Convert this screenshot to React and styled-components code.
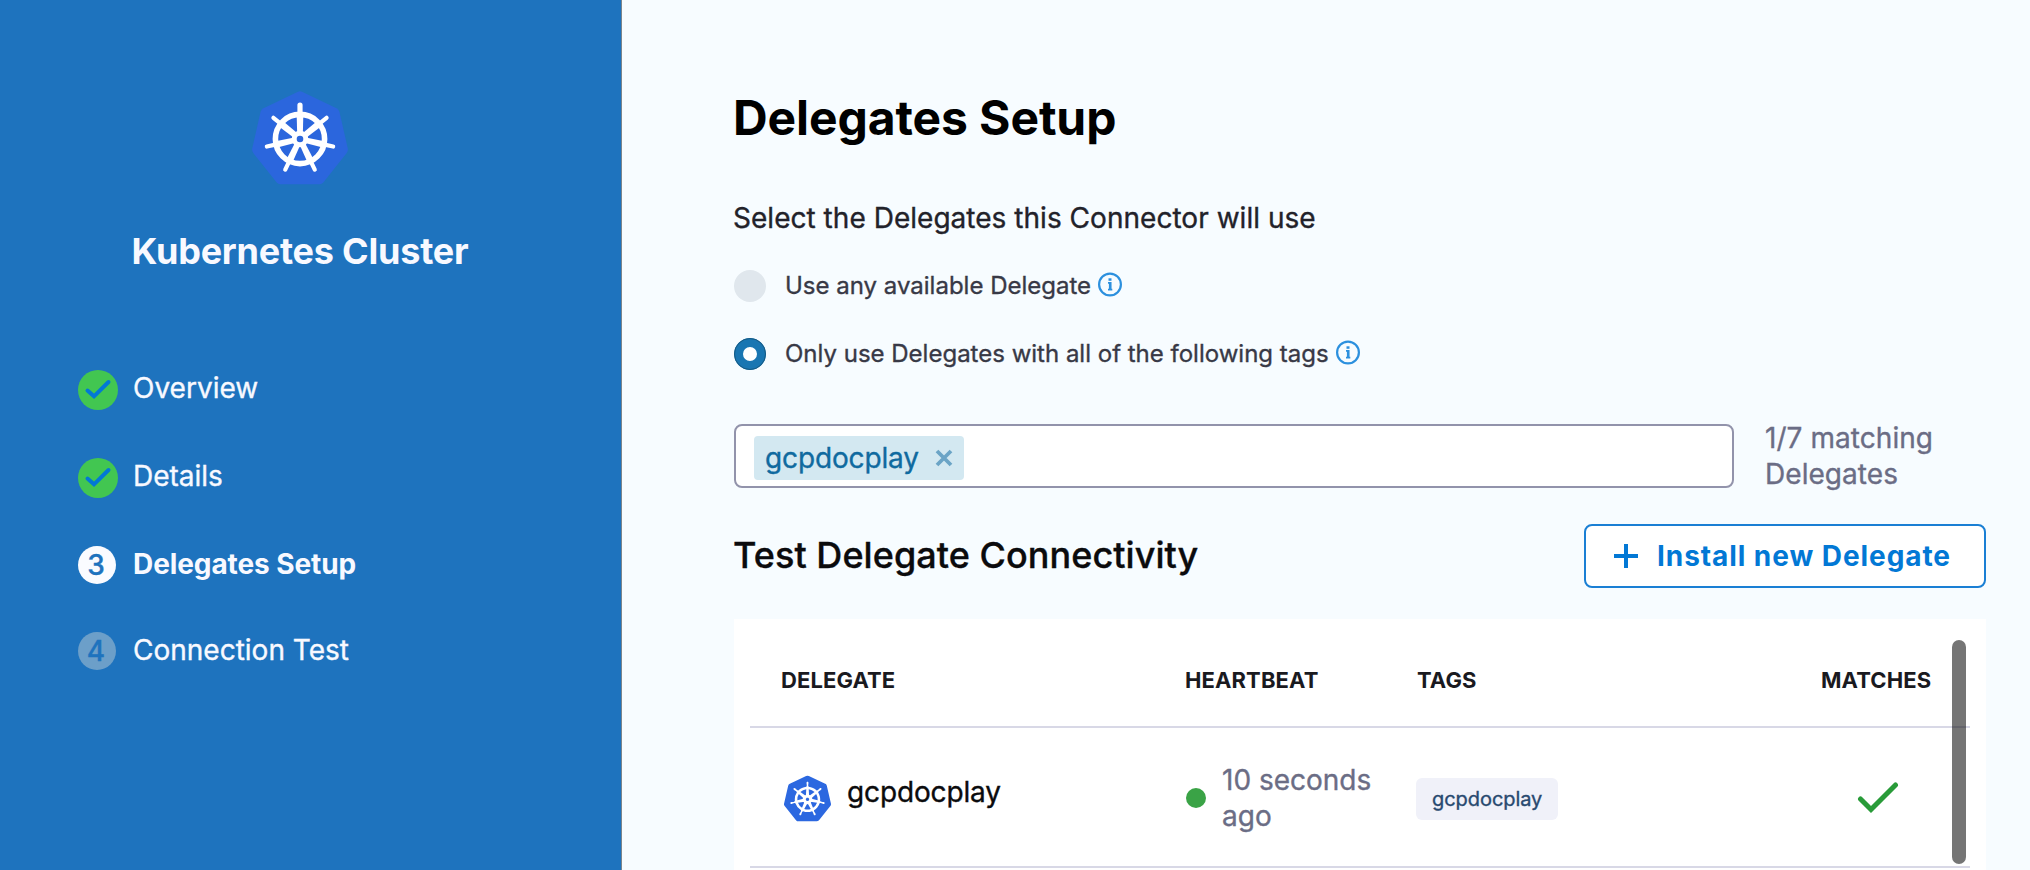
import React from "react";
import styled, { createGlobalStyle } from "styled-components";
import { SiKubernetes } from "react-icons/si";

const GlobalStyle = createGlobalStyle`
  *, *::before, *::after { box-sizing: border-box; }
  body {
    margin: 0;
    overflow: hidden;
    background: #f7fcff;
    font-family: Inter, "Liberation Sans", sans-serif;
    font-size: 28px;
    font-weight: 400;
    -webkit-text-stroke: 0.35px currentColor;
    color: #22222a;
  }
  h1, h2, p { margin: 0; font-weight: inherit; }
`;

const Page = styled.div`
  display: flex;
  height: 870px;
  overflow: hidden;
`;

const Sidebar = styled.aside`
  width: 622px;
  flex: none;
  padding: 91px 21px 0 0;
  background: #1e73be;
  border-right: 1px solid #7d868c;
  color: #f8f9ff;
`;

const Brand = styled.div`
  display: flex;
  flex-direction: column;
  align-items: center;
  gap: 44px;
`;

const BrandName = styled.h2`
  font-size: 36px;
  font-weight: 700;
  line-height: 44px;
  letter-spacing: -0.006em;
  -webkit-text-stroke: 0;
`;

const Steps = styled.div`
  display: flex;
  flex-direction: column;
  gap: 48px;
  padding: 97px 0 0 78px;
`;

const Step = styled.div`
  display: grid;
  grid-template-columns: 40px auto;
  column-gap: 15px;
  align-items: center;
  height: ${(p) => (p.$done ? 40 : 38)}px;
`;

const StepLabel = styled.span`
  line-height: 34px;
  padding-bottom: ${(p) => (p.$done ? 5 : 3)}px;
  font-weight: ${(p) => (p.$active ? 700 : 400)};
  letter-spacing: ${(p) => (p.$active ? "-0.003em" : "0")};
  ${(p) => p.$active && "-webkit-text-stroke: 0;"}
`;

const StepNumber = styled.span`
  width: 38px;
  height: 38px;
  border-radius: 50%;
  display: flex;
  align-items: center;
  justify-content: center;
  padding-right: 2px;
  font-weight: 500;
  color: #1e73be;
  background: ${(p) => (p.$active ? "#fafbff" : "#6c9fc9")};
`;

const Main = styled.main`
  flex: 1;
  min-width: 0;
  padding: 89px 44px 0 112px;
  display: flex;
  flex-direction: column;
`;

const Heading = styled.h1`
  font-size: 48px;
  font-weight: 700;
  line-height: 58px;
  letter-spacing: -0.002em;
  margin-left: -1px;
  color: #000;
  -webkit-text-stroke: 0;
`;

const Lead = styled.p`
  margin: 54px 0 0 -1px;
  line-height: 34px;
  letter-spacing: 0.001em;
`;

const Options = styled.div`
  display: flex;
  flex-direction: column;
  gap: 36px;
  margin-top: 35px;
`;

const Option = styled.label`
  display: flex;
  align-items: center;
  height: 32px;
  font-size: 24px;
  color: #383946;

  svg { margin: 0 0 4px 7px; }
`;

const OptionText = styled.span`
  margin-left: 19px;
  padding-bottom: 2px;
`;

const Radio = styled.span`
  width: 32px;
  height: 32px;
  border-radius: 50%;
  background: ${(p) => (p.$checked ? "#fff" : "#e0e7ed")};
  border: ${(p) => (p.$checked ? "9px solid #1976b2" : "none")};
  outline: ${(p) => (p.$checked ? "1px solid #175a83" : "none")};
  outline-offset: -1px;
`;

const TagRow = styled.div`
  display: flex;
  align-items: center;
  height: 72px;
  margin-top: 50px;
`;

const TagInput = styled.div`
  width: 1000px;
  height: 64px;
  display: flex;
  align-items: center;
  padding: 4px 18px 0;
  border: 2px solid #9293ab;
  border-radius: 8px;
  background: #fff;
`;

const SelectedTag = styled.span`
  display: flex;
  align-items: center;
  justify-content: space-between;
  width: 210px;
  height: 44px;
  padding: 0 11px;
  border-radius: 4px;
  background: #d3e8f1;
  color: #106a9f;
  letter-spacing: -0.005em;
`;

const MatchCount = styled.p`
  width: 200px;
  margin-left: 31px;
  line-height: 36px;
  letter-spacing: 0.002em;
  color: #6b6d85;
`;

const TestRow = styled.div`
  display: flex;
  align-items: center;
  justify-content: space-between;
  height: 64px;
  margin-top: 32px;
`;

const SubHeading = styled.h2`
  font-size: 36px;
  font-weight: 500;
  color: #0b0b0d;
  margin-left: -1px;
  padding-bottom: 3px;
  letter-spacing: 0.0015em;
`;

const InstallButton = styled.button`
  display: flex;
  align-items: center;
  width: 402px;
  height: 64px;
  padding: 0 0 0 28px;
  gap: 19px;
  border: 2px solid #1a7fd4;
  border-radius: 8px;
  background: #fff;
  color: #0278d5;
  font: 700 28px Inter, sans-serif;
  letter-spacing: 0.93px;
  white-space: nowrap;
  -webkit-text-stroke: 0;
`;

const Panel = styled.section`
  position: relative;
  flex: 1;
  margin-top: 31px;
  padding: 0 16px;
  background: #fff;
`;

const TableRow = styled.div`
  display: grid;
  grid-template-columns: 404px 232px 404px auto;
  align-items: center;
  padding: ${(p) => (p.$header ? "15px 0 0 31px" : "2px 0 0 32px")};
  height: ${(p) => (p.$header ? 109 : 140)}px;
  border-bottom: 2px solid #d8d8e6;
`;

const ColumnTitle = styled.span`
  font-size: 22px;
  font-weight: 700;
  letter-spacing: 0.005em;
  color: #1a1a1f;
  -webkit-text-stroke: 0;
`;

const DelegateCell = styled.div`
  display: flex;
  align-items: center;
  gap: 16px;
  padding-left: 2px;
  color: #0b0b0d;
  letter-spacing: -0.005em;

  > span:last-child { padding-bottom: 12px; }
`;

const DelegateMark = styled.span`
  display: flex;
  width: 47px;
  color: #2c68e0;
`;

const Heartbeat = styled.div`
  display: flex;
  align-items: center;
  gap: 16px;
  line-height: 36px;
  color: #6b6d85;

  p { width: 170px; }
`;

const Dot = styled.span`
  flex: none;
  width: 20px;
  height: 20px;
  border-radius: 50%;
  background: #3aa346;
`;

const TagPill = styled.span`
  justify-self: start;
  display: flex;
  align-items: center;
  height: 42px;
  padding: 0 16px;
  margin: 2px 0 0 -2px;
  border-radius: 6px;
  background: #f0f1f9;
  color: #28496f;
  font-size: 20px;
  letter-spacing: -0.003em;
`;

const MatchCell = styled.div`
  display: flex;
  padding-left: 35px;
`;

const ScrollThumb = styled.div`
  position: absolute;
  top: 21px;
  right: 20px;
  width: 14px;
  height: 224px;
  border-radius: 7px;
  background: rgba(0, 0, 0, 0.54);
`;

const SPOKES = [0, 1, 2, 3, 4, 5, 6].map((i) => (i * 360) / 7);

function ClusterLogo() {
  return (
    <svg width="96" height="94" viewBox="0 0 96 94">
      <path
        d="M46 .7Q48 0 50 .7L84.500 17.200Q86.800 18.400 87.400 20.800L95.800 57.500Q96.200 60 94.700 62L71.500 91.300Q69.800 93.200 67.500 93.300H28.500Q26.200 93.200 24.500 91.300L1.300 62Q-.2 60 .2 57.500L8.600 20.800Q9.200 18.400 11.500 17.200Z"
        fill="#2b66dd"
      />
      <g transform="translate(48 48)" fill="#fff" stroke="#fff">
        <circle r="24.600" fill="none" strokeWidth="5.600" />
        {SPOKES.map((a) => (
          <g key={a} transform={`rotate(${a})`}>
            <path d="M0-24V-34" strokeWidth={a === 0 ? 5.200 : 4.200} strokeLinecap="round" />
            <path d="M-2.800-4L-3.300-23H3.300L2.800-4Z" stroke="none" />
          </g>
        ))}
        <circle r="5.800" fill="#2b66dd" strokeWidth="5" />
      </g>
    </svg>
  );
}

function DoneMark() {
  return (
    <svg width="40" height="40" viewBox="0 0 40 40">
      <circle cx="20" cy="20" r="20" fill="#42c651" />
      <path d="M9.500 20.500L16 26.300L30.500 12" fill="none" stroke="#0278d5" strokeWidth="4" strokeLinecap="round" strokeLinejoin="miter" />
    </svg>
  );
}

function InfoMark() {
  return (
    <svg width="24" height="25" viewBox="0 0 24 25" fill="none" stroke="#2c90de">
      <circle cx="12" cy="12.500" r="10.900" strokeWidth="2.200" />
      <path d="M10 10.800H12.200V17.600M10 17.600H14.300" strokeWidth="1.800" />
      <path d="M12 6.300V8.800" strokeWidth="3" />
      <path d="M12.200 10V18" strokeWidth="2.600" />
    </svg>
  );
}

const STEPS = [
  { label: "Overview", done: true },
  { label: "Details", done: true },
  { label: "Delegates Setup", active: true },
  { label: "Connection Test" },
];

export default function App() {
  return (
    <Page>
      <GlobalStyle />
      <Sidebar>
        <Brand>
          <ClusterLogo />
          <BrandName>Kubernetes Cluster</BrandName>
        </Brand>
        <Steps>
          {STEPS.map((s, i) => (
            <Step key={s.label} $done={s.done}>
              {s.done ? <DoneMark /> : <StepNumber $active={s.active}>{i + 1}</StepNumber>}
              <StepLabel $active={s.active} $done={s.done}>{s.label}</StepLabel>
            </Step>
          ))}
        </Steps>
      </Sidebar>
      <Main>
        <Heading>Delegates Setup</Heading>
        <Lead>Select the Delegates this Connector will use</Lead>
        <Options>
          <Option>
            <Radio />
            <OptionText>Use any available Delegate</OptionText>
            <InfoMark />
          </Option>
          <Option>
            <Radio $checked />
            <OptionText>Only use Delegates with all of the following tags</OptionText>
            <InfoMark />
          </Option>
        </Options>
        <TagRow>
          <TagInput>
            <SelectedTag>
              <span>gcpdocplay</span>
              <svg width="18" height="18" viewBox="0 0 18 18" fill="none" stroke="#6ba4c6" strokeWidth="3.800">
                <path d="M2 2L16 16M16 2L2 16" />
              </svg>
            </SelectedTag>
          </TagInput>
          <MatchCount>1/7 matching Delegates</MatchCount>
        </TagRow>
        <TestRow>
          <SubHeading>Test Delegate Connectivity</SubHeading>
          <InstallButton>
            <svg width="24" height="24" viewBox="0 0 24 24" stroke="#0278d5" strokeWidth="4">
              <path d="M12 0V24M0 12H24" />
            </svg>
            Install new Delegate
          </InstallButton>
        </TestRow>
        <Panel>
          <TableRow $header>
            <ColumnTitle>DELEGATE</ColumnTitle>
            <ColumnTitle>HEARTBEAT</ColumnTitle>
            <ColumnTitle>TAGS</ColumnTitle>
            <ColumnTitle>MATCHES</ColumnTitle>
          </TableRow>
          <TableRow>
            <DelegateCell>
              <DelegateMark><SiKubernetes size={47} /></DelegateMark>
              <span>gcpdocplay</span>
            </DelegateCell>
            <Heartbeat>
              <Dot />
              <p>10 seconds ago</p>
            </Heartbeat>
            <TagPill>gcpdocplay</TagPill>
            <MatchCell>
              <svg width="42" height="32" viewBox="0 0 42 32" fill="none" stroke="#299b39" strokeWidth="5">
                <path d="M3.500 17L14 27.500L38.500 3" strokeLinecap="round" />
              </svg>
            </MatchCell>
          </TableRow>
          <ScrollThumb />
        </Panel>
      </Main>
    </Page>
  );
}
